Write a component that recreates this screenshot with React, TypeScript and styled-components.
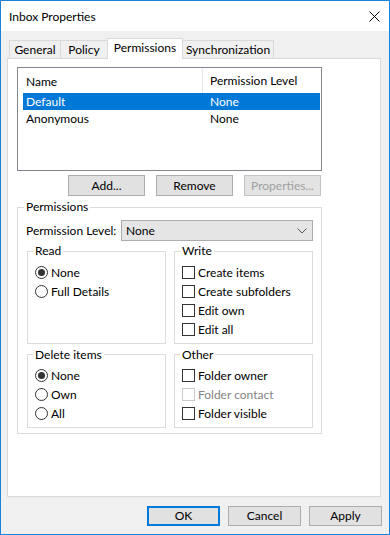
import styled, { createGlobalStyle, css } from "styled-components";

const GlobalStyle = createGlobalStyle`
  * { box-sizing: border-box; }
  body {
    margin: 0;
    font-family: Lato, "Noto Sans", sans-serif;
    font-size: 12px;
    color: #000;
    white-space: nowrap;
  }
`;

interface Member {
  name: string;
  level: string;
  selected?: boolean;
}

const members: Member[] = [
  { name: "Default", level: "None", selected: true },
  { name: "Anonymous", level: "None" },
];

const tabs = [
  { label: "General", width: 52 },
  { label: "Policy", width: 48 },
  { label: "Permissions", width: 76, active: true },
  { label: "Synchronization", width: 92 },
];

function Radio({ label, checked }: { label: string; checked?: boolean }) {
  return (
    <OptionRow>
      <RadioCircle checked={checked} />
      <span>{label}</span>
    </OptionRow>
  );
}

function Check({ label, disabled }: { label: string; disabled?: boolean }) {
  return (
    <OptionRow disabled={disabled}>
      <CheckBox disabled={disabled} />
      <span>{label}</span>
    </OptionRow>
  );
}

export default function App() {
  return (
    <>
      <GlobalStyle />
      <Window>
        <TitleBar>
          <TitleText>Inbox Properties</TitleText>
          <Close>
            <svg width="11" height="11" viewBox="0 0 11 11">
              <path d="M0.5 0.5 L10.5 10.5 M10.5 0.5 L0.5 10.5" stroke="#000" strokeWidth="1" />
            </svg>
          </Close>
        </TitleBar>
        <Body>
          <TabStrip>
            {tabs.map((t) => (
              <Tab key={t.label} width={t.width} active={t.active}>
                {t.label}
              </Tab>
            ))}
          </TabStrip>
          <Panel>
            <ListView>
              <ListHeader>
                <HeaderCell first>Name</HeaderCell>
                <HeaderCell>Permission Level</HeaderCell>
              </ListHeader>
              {members.map((m) => (
                <ListRow key={m.name} selected={m.selected}>
                  <span>{m.name}</span>
                  <span>{m.level}</span>
                </ListRow>
              ))}
            </ListView>
            <ButtonRow>
              <PushButton>Add...</PushButton>
              <PushButton>Remove</PushButton>
              <PushButton disabled>Properties...</PushButton>
            </ButtonRow>
            <Group outer>
              <Legend outer>Permissions</Legend>
              <LevelRow>
                <span>Permission Level:</span>
                <Select>
                  <span>None</span>
                  <svg width="10" height="6" viewBox="0 0 10 6">
                    <polyline points="0.5,0.5 5,5 9.5,0.5" fill="none" stroke="#555" strokeWidth="1" />
                  </svg>
                </Select>
              </LevelRow>
              <GroupGrid>
                <Group>
                  <Legend>Read</Legend>
                  <Radio label="None" checked />
                  <Radio label="Full Details" />
                </Group>
                <Group>
                  <Legend>Write</Legend>
                  <Check label="Create items" />
                  <Check label="Create subfolders" />
                  <Check label="Edit own" />
                  <Check label="Edit all" />
                </Group>
              </GroupGrid>
              <GroupGrid>
                <Group>
                  <Legend>Delete items</Legend>
                  <Radio label="None" checked />
                  <Radio label="Own" />
                  <Radio label="All" />
                </Group>
                <Group>
                  <Legend>Other</Legend>
                  <Check label="Folder owner" />
                  <Check label="Folder contact" disabled />
                  <Check label="Folder visible" />
                </Group>
              </GroupGrid>
            </Group>
          </Panel>
          <Footer>
            <DialogButton isDefault>OK</DialogButton>
            <DialogButton>Cancel</DialogButton>
            <DialogButton>Apply</DialogButton>
          </Footer>
        </Body>
      </Window>
    </>
  );
}

const Window = styled.div`
  width: 390px;
  height: 535px;
  border: 1px solid #1883d7;
  background: #f0f0f0;
  display: flex;
  flex-direction: column;
`;

const TitleBar = styled.div`
  height: 30px;
  background: #fff;
  display: flex;
  align-items: center;
  justify-content: space-between;
  padding: 0 9px 0 8px;
`;

const TitleText = styled.span`
  font-size: 12px;
  margin-top: 1px;
`;

const Close = styled.div`
  width: 11px;
  height: 11px;
  display: flex;
`;

const Body = styled.div`
  padding: 7px 8px 0 6px;
`;

const TabStrip = styled.div`
  display: flex;
  align-items: flex-start;
  height: 21px;
  padding-left: 2px;
  margin-bottom: -1px;
  position: relative;
  z-index: 1;
`;

const Tab = styled.div<{ width: number; active?: boolean }>`
  width: ${(p) => p.width}px;
  height: 18px;
  margin-top: 2px;
  margin-left: -1px;
  border: 1px solid #d9d9d9;
  border-bottom: none;
  background: #f0f0f0;
  display: flex;
  align-items: center;
  justify-content: center;
  line-height: 16px;
  &:first-child {
    margin-left: 0;
  }
  ${(p) =>
    p.active &&
    css`
      height: 21px;
      margin-top: 0;
      background: #fff;
      padding-bottom: 2px;
      position: relative;
      z-index: 1;
    `}
`;

const Panel = styled.div`
  height: 439px;
  background: #fff;
  border: 1px solid #d9d9d9;
  padding: 8px 0 0 9px;
`;

const ListView = styled.div`
  width: 305px;
  height: 104px;
  border: 1px solid #828790;
`;

const ListHeader = styled.div`
  display: grid;
  grid-template-columns: 185px 1fr;
  height: 25px;
`;

const HeaderCell = styled.div<{ first?: boolean }>`
  display: flex;
  align-items: center;
  padding-left: ${(p) => (p.first ? 8 : 7)}px;
  ${(p) =>
    p.first &&
    css`
      border-right: 1px solid #e5e5e5;
      margin-top: 1px;
    `}
`;

const ListRow = styled.div<{ selected?: boolean }>`
  display: grid;
  grid-template-columns: 184px 1fr;
  height: 17px;
  margin: 0 1px 0 5px;
  padding-left: 3px;
  align-items: center;
  line-height: 16px;
  ${(p) =>
    p.selected &&
    css`
      background: #0078d7;
      color: #fff;
    `}
`;

const buttonBase = css`
  font-family: inherit;
  font-size: 12px;
  color: #000;
  background: #e1e1e1;
  border: 1px solid #adadad;
  padding: 0;
  display: flex;
  align-items: center;
  justify-content: center;
  line-height: 16px;
`;

const ButtonRow = styled.div`
  width: 305px;
  display: flex;
  justify-content: flex-end;
  gap: 11px;
  padding-right: 1px;
  margin-top: 4px;
`;

const PushButton = styled.button`
  ${buttonBase};
  width: 77px;
  height: 21px;
  &:disabled {
    color: #a0a0a0;
    border-color: #c4c4c4;
    background: #e3e3e3;
  }
`;

const Group = styled.fieldset<{ outer?: boolean }>`
  margin: 0;
  min-width: 0;
  border: 1px solid #dcdcdc;
  padding: 3.5px 6px 4px 7px;
  ${(p) =>
    p.outer &&
    css`
      width: 305px;
      margin-top: 3px;
      padding: 5px 8px 5px 9px;
    `}
`;

const Legend = styled.legend<{ outer?: boolean }>`
  padding: 0 2px;
  margin-left: ${(p) => (p.outer ? -3 : -2)}px;
  line-height: 16px;
`;

const LevelRow = styled.div`
  display: flex;
  align-items: center;
  justify-content: space-between;
  height: 21px;
  margin-left: -1px;
`;

const Select = styled.div`
  width: 192px;
  height: 21px;
  background: #e5e5e5;
  border: 1px solid #acacac;
  display: flex;
  align-items: center;
  justify-content: space-between;
  padding: 0 5px 0 4px;
`;

const GroupGrid = styled.div`
  display: grid;
  grid-template-columns: 139px 139px;
  gap: 8px;
  margin-top: 2px;
  & + & {
    margin-top: 3px;
  }
`;

const OptionRow = styled.div<{ disabled?: boolean }>`
  display: flex;
  align-items: center;
  gap: 3px;
  height: 19px;
  color: ${(p) => (p.disabled ? "#838383" : "#000")};
`;

const RadioCircle = styled.span<{ checked?: boolean }>`
  width: 13px;
  height: 13px;
  border: 1px solid #333;
  border-radius: 50%;
  background: #fff;
  display: flex;
  align-items: center;
  justify-content: center;
  flex-shrink: 0;
  &::after {
    content: "";
    width: 7px;
    height: 7px;
    border-radius: 50%;
    background: #333;
    display: ${(p) => (p.checked ? "block" : "none")};
  }
`;

const CheckBox = styled.span<{ disabled?: boolean }>`
  width: 13px;
  height: 13px;
  border: 1px solid ${(p) => (p.disabled ? "#cccccc" : "#333")};
  background: #fff;
  flex-shrink: 0;
`;

const Footer = styled.div`
  display: flex;
  justify-content: flex-end;
  gap: 8px;
  margin-top: 9px;
  margin-right: -1px;
`;

const DialogButton = styled.button<{ isDefault?: boolean }>`
  ${buttonBase};
  width: 73px;
  height: 20px;
  ${(p) =>
    p.isDefault &&
    css`
      border: 2px solid #0078d7;
    `}
`;
